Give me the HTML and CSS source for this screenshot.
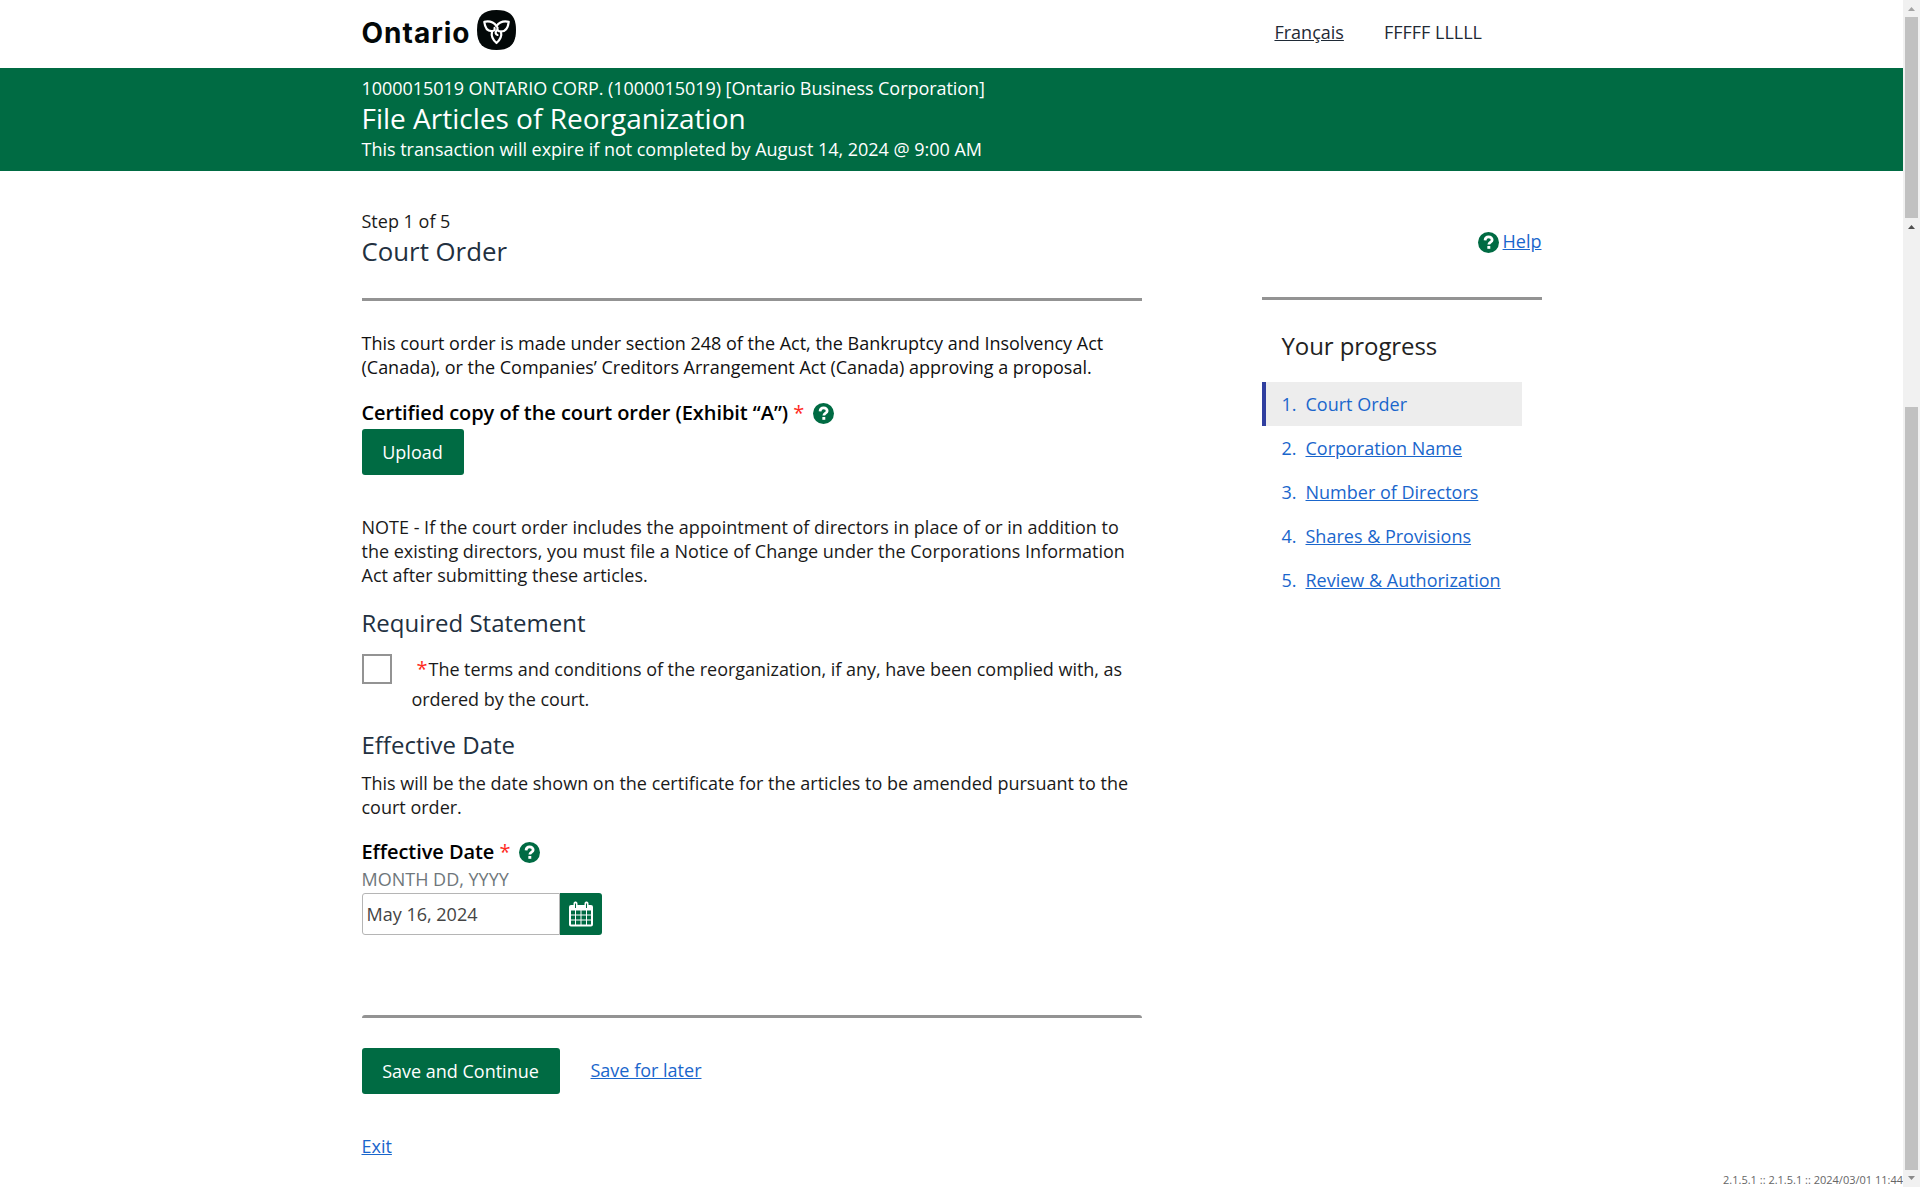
FILE: index.html
```html
<!DOCTYPE html>
<html lang="en">
<head>
<meta charset="utf-8">
<title>File Articles of Reorganization</title>
<link rel="stylesheet" href="styles.css">
</head>
<body>
<svg class="defs" width="0" height="0" aria-hidden="true">
  <symbol id="help" viewBox="0 0 20 20">
    <circle cx="10" cy="10" r="10" fill="#006b43"/>
    <path d="M6.700 7.900C6.900 5.700 8.300 4.700 10.100 4.700C12.200 4.700 13.500 5.900 13.500 7.500C13.500 9.700 10.300 9.600 10.300 12" fill="none" stroke="#fff" stroke-width="2.600"/>
    <rect x="8.900" y="13.300" width="2.800" height="2.700" fill="#fff"/>
  </symbol>
</svg>
<div class="app">
  <div class="page">
    <header class="topbar wrap">
      <a class="logo"><span class="logo-text">Ontario</span>
        <svg class="logo-mark" width="39" height="40" viewBox="0 0 39 40">
          <path d="M19.500 0C33 0 39 6 39 20S33 40 19.500 40S0 34 0 20S6 0 19.500 0Z" fill="#030808"/>
          <g fill="none" stroke="#fff" stroke-width="2.200" stroke-linejoin="round" stroke-linecap="round">
            <path d="M19.500 16C16.500 12 12 10.800 7.300 11.800C8 18 11 21.500 15.500 21C17.500 20.800 18 19.500 17.500 18"/>
            <path d="M19.500 16C22.500 12 27 10.800 31.700 11.800C31 18 28 21.500 24 21.500C21 21.500 20 20 20.500 17.500"/>
            <path d="M15 21.500C14 26 16 30 19.500 33C23 30 25 26 24 21.500"/>
            <path d="M19.500 20.500C18 22.500 18.500 24.500 20.500 25"/>
          </g>
        </svg>
      </a>
      <nav class="topnav"><a class="lang">Français</a><span>FFFFF LLLLL</span></nav>
    </header>
    <div class="banner">
      <div class="wrap">
        <div class="banner-line corp">1000015019 ONTARIO CORP. (1000015019) [Ontario Business Corporation]</div>
        <h1>File Articles of Reorganization</h1>
        <div class="banner-line">This transaction will expire if not completed by August 14, 2024 @ 9:00 AM</div>
      </div>
    </div>
    <div class="content wrap">
      <main>
        <div class="step">Step 1 of 5</div>
        <h2 class="step-title">Court Order</h2>
        <div class="rule"></div>
        <p class="intro">This court order is made under section 248 of the Act, the Bankruptcy and Insolvency Act (Canada), or the Companies’ Creditors Arrangement Act (Canada) approving a proposal.</p>
        <div class="label">Certified copy of the court order (Exhibit “A”) <span class="req">*</span><svg class="help-icon"><use href="#help"/></svg></div>
        <button class="btn upload">Upload</button>
        <p class="note">NOTE - If the court order includes the appointment of directors in place of or in addition to the existing directors, you must file a Notice of Change under the Corporations Information Act after submitting these articles.</p>
        <h3 class="statement-title">Required Statement</h3>
        <div class="check">
          <span class="box"></span>
          <p><span class="star">*</span>The terms and conditions of the reorganization, if any, have been complied with, as ordered by the court.</p>
        </div>
        <h3 class="date-title">Effective Date</h3>
        <p class="date-text">This will be the date shown on the certificate for the articles to be amended pursuant to the court order.</p>
        <div class="label date-label">Effective Date <span class="req">*</span><svg class="help-icon"><use href="#help"/></svg></div>
        <div class="hint">MONTH DD, YYYY</div>
        <div class="date-field">
          <span class="date-value">May 16, 2024</span>
          <span class="date-btn">
            <svg width="24" height="26" viewBox="0 0 24 26">
              <path fill="#fff" fill-rule="evenodd" d="M2 4H4.500V2.500A2 2 0 0 1 6 .5H7A2 2 0 0 1 8.500 2.500V4H15.500V2.500A2 2 0 0 1 17 .5H18A2 2 0 0 1 19.500 2.500V4H22A2 2 0 0 1 24 6V23.500A2 2 0 0 1 22 25.500H2A2 2 0 0 1 0 23.500V6A2 2 0 0 1 2 4ZM6 2.500V7H7V2.500ZM17 2.500V7H18V2.500ZM2 9.500V13.500H6V9.500ZM7 9.500V13.500H11.500V9.500ZM12.500 9.500V13.500H17V9.500ZM18 9.500V13.500H22V9.500ZM2 14.500V18.500H6V14.500ZM7 14.500V18.500H11.500V14.500ZM12.500 14.500V18.500H17V14.500ZM18 14.500V18.500H22V14.500ZM2 19.500V23.500H6V19.500ZM7 19.500V23.500H11.500V19.500ZM12.500 19.500V23.500H17V19.500ZM18 19.500V23.500H22V19.500Z"/>
            </svg>
          </span>
        </div>
        <div class="rule end-rule"></div>
        <div class="actions"><button class="btn save">Save and Continue</button><a class="link">Save for later</a></div>
        <a class="link exit">Exit</a>
      </main>
      <aside>
        <div class="help"><svg class="side-help"><use href="#help"/></svg><a class="link">Help</a></div>
        <div class="rule"></div>
        <h2 class="progress-title">Your progress</h2>
        <ol class="steps">
          <li class="current"><span class="num">1.</span><span>Court Order</span></li>
          <li><span class="num">2.</span><a class="link">Corporation Name</a></li>
          <li><span class="num">3.</span><a class="link">Number of Directors</a></li>
          <li><span class="num">4.</span><a class="link">Shares &amp; Provisions</a></li>
          <li><span class="num">5.</span><a class="link">Review &amp; Authorization</a></li>
        </ol>
      </aside>
    </div>
    <footer>2.1.5.1 :: 2.1.5.1 :: 2024/03/01 11:44</footer>
  </div>
  <div class="scrollbar">
    <svg class="arrow first" width="7" height="4" viewBox="0 0 7 4"><path d="M3.500 0L7 4H0Z" fill="#a3a3a3"/></svg>
    <div class="thumb small"></div>
    <svg class="arrow second" width="7" height="4" viewBox="0 0 7 4"><path d="M3.500 0L7 4H0Z" fill="#505050"/></svg>
    <div class="thumb large"></div>
    <svg class="arrow last" width="7" height="4" viewBox="0 0 7 4"><path d="M0 0H7L3.500 4Z" fill="#8a8a8a"/></svg>
  </div>
</div>
</body>
</html>
```
FILE: styles.css
```css
* { box-sizing: border-box; }
body { margin: 0; background: #fff; color: #1a1a1a; font: 18px/24px "Open Sans", "Noto Sans", sans-serif; overflow: hidden; }
h1, h2, h3, p, ol { margin: 0; padding: 0; font-weight: 400; }
.defs { display: block; }
.app { display: flex; height: 1187px; }
.page { flex: 1; display: flex; flex-direction: column; }
.wrap { width: 1180px; margin: 0 auto; }

.topbar { height: 68px; display: flex; justify-content: space-between; }
.logo { display: flex; padding-top: 10px; color: #030808; }
.logo-text { width: 115px; font-family: Inter, "Open Sans", sans-serif; font-size: 28px; font-weight: 700; line-height: 46px; letter-spacing: 1px; white-space: nowrap; }
.topnav { display: flex; gap: 40px; padding: 20px 59.500px 0 0; line-height: 25px; color: #1f2a36; }
.lang { text-decoration: underline; }

.banner { height: 103px; padding-top: 8px; background: #006b43; color: #fff; }
.banner-line { line-height: 25px; letter-spacing: -0.02px; }
.corp { letter-spacing: -0.055px; }
h1 { padding-bottom: 2px; font-size: 28px; line-height: 34px; }

.content { flex: 1; display: flex; justify-content: space-between; }
main { width: 780px; }
.step { margin-top: 38px; }
.step-title { padding-top: 1px; font-size: 25.800px; line-height: 34px; color: #22303f; }
.rule { height: 3px; background: #939393; }
main > .rule { margin-top: 30px; }
.intro { margin-top: 30px; color: #111; letter-spacing: -0.010px; }
.label { display: flex; align-items: center; height: 30px; margin-top: 19px; color: #000; font-size: 20px; font-weight: 600; letter-spacing: -0.06px; white-space: pre; }
.req { color: #ff2b1e; font-weight: 400; }
.help-icon { width: 21px; height: 21px; margin-left: 9px; }
.btn { display: block; height: 46px; padding: 0; border: 0; border-radius: 3px; background: #006b43; color: #fff; font: 18px/46px "Open Sans", sans-serif; }
.upload { width: 102px; margin-top: 1px; }
.note { margin-top: 40px; }
h3 { font-size: 24px; line-height: 32px; color: #22303f; }
.statement-title { margin-top: 20px; }
.check { display: flex; gap: 20px; margin-top: 15px; line-height: 30px; letter-spacing: -0.03px; }
.box { flex: none; width: 30px; height: 30px; border: 2px solid #939393; }
.star { margin: 0 1px 0 5px; color: #ff2b1e; font-size: 20px; line-height: 20px; }
.date-title { margin-top: 15px; }
.date-text { margin-top: 10px; }
.date-label { margin-top: 18px; }
.hint { margin-top: 0; color: #6f777b; }
.date-field { display: flex; width: 240px; height: 42px; margin-top: 2px; }
.date-value { flex: 1; padding-left: 4px; border: 1px solid #b5b5b5; border-radius: 3px 0 0 3px; line-height: 40px; color: #444; }
.date-btn { display: grid; place-items: center; width: 42px; border-radius: 0 3px 3px 0; background: #006b43; }
main > .end-rule { margin-top: 80px; border-radius: 4px 4px 0 0; }
.actions { display: flex; gap: 31px; margin-top: 30px; line-height: 44px; }
.save { width: 198px; }
.link { color: #1a66cc; text-decoration: underline; }
.exit { display: block; margin-top: 40px; }

aside { width: 280px; }
.help { display: flex; justify-content: flex-end; gap: 4px; margin-top: 58px; height: 68px; }
.side-help { width: 21px; height: 21px; margin-top: 3px; }
.progress-title { margin-top: 29px; padding-left: 20px; font-size: 24px; line-height: 34px; color: #222; letter-spacing: -0.08px; }
.steps { width: 260px; margin-top: 19px; list-style: none; color: #1a66cc; }
.steps li { display: flex; height: 44px; padding-left: 20px; line-height: 44px; }
.steps .current { padding-left: 16px; border-left: 4px solid #303f9f; background: #ededed; }
.num { width: 24px; }

footer { height: 15px; text-align: right; font-size: 11px; line-height: 15px; color: #666; }
.scrollbar { width: 17px; display: flex; flex-direction: column; align-items: center; background: #f1f1f1; }
.arrow { flex: none; }
.first { margin-top: 7px; }
.thumb { width: 13px; background: #c1c1c1; }
.small { height: 201px; margin-top: 6px; }
.second { margin-top: 7px; }
.large { height: 763px; margin-top: 178px; }
.last { margin-top: 6px; }
```
